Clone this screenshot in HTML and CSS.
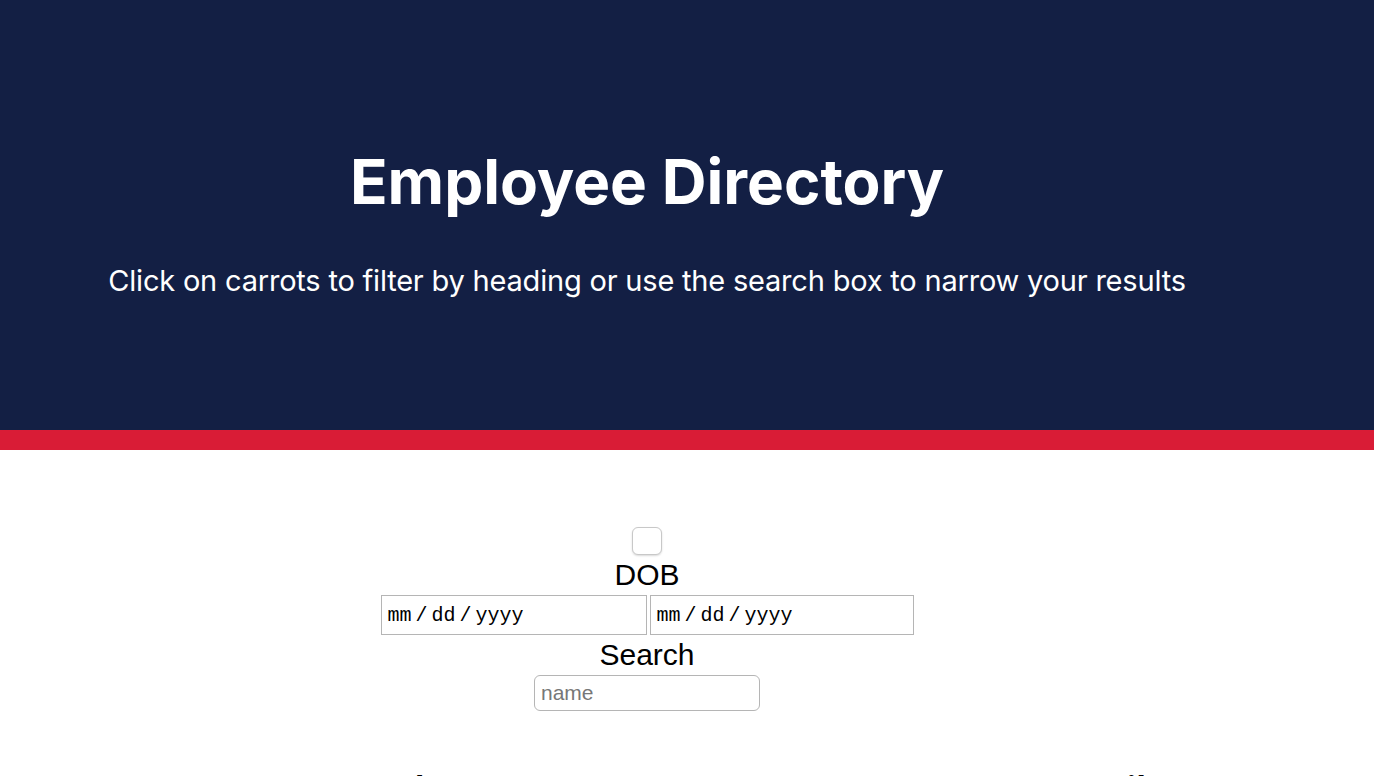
FILE: index.html
```html
<!DOCTYPE html>
<html>
<head>
<meta charset="utf-8">
<link rel="stylesheet" href="styles.css">
</head>
<body>
<header class="hero">
  <h1 class="hero-title">Employee Directory</h1>
  <p class="hero-sub">Click on carrots to filter by heading or use the search box to narrow your results</p>
</header>
<div class="stripe"></div>
<main class="content">
  <form class="filters">
    <input type="checkbox" class="check">
    <label class="label">DOB</label>
    <div class="dates">
      <div class="date"><span>mm</span><span>/</span><span>dd</span><span>/</span><span>yyyy</span></div>
      <div class="date date-2"><span>mm</span><span>/</span><span>dd</span><span>/</span><span>yyyy</span></div>
    </div>
    <label class="label">Search</label>
    <input type="text" class="search" placeholder="name">
  </form>
  <div class="table-head">
    <div class="th">Image</div>
    <div class="th">Phone</div>
    <div class="th">Name</div>
    <div class="th">DOB</div>
    <div class="th">Email</div>
  </div>
</main>
</body>
</html>
```
FILE: styles.css
```css
* { box-sizing: border-box; }
body {
  margin: 0;
  font-family: "Inter", "Liberation Sans", sans-serif;
  background: #fff;
  color: #000;
}
.hero {
  height: 430px;
  background: #131f44;
  color: #fff;
  padding: 144px 80px 0 0;
  text-align: center;
}
.hero-title {
  margin: 0;
  font-size: 62px;
  line-height: 76px;
  font-weight: 700;
}
.hero-sub {
  margin: 43px 0 0;
  font-size: 29px;
  line-height: 36px;
  font-weight: 400;
  letter-spacing: -0.2px;
}
.stripe {
  height: 20px;
  background: #d91c36;
}
.content {
  padding: 77px 80px 0 0;
  font-family: "Liberation Sans", "Helvetica", sans-serif;
}
.filters {
  display: flex;
  flex-direction: column;
  align-items: center;
}
.check {
  appearance: none;
  width: 30px;
  height: 28px;
  margin: 0;
  border: 1px solid #c8c8c8;
  border-radius: 6px;
  background: #fff;
  box-shadow: 0 1px 2px rgba(0,0,0,0.15);
}
.label {
  font-size: 30px;
  line-height: 40px;
}
.dates {
  display: flex;
  gap: 3px;
}
.date {
  display: flex;
  gap: 4px;
  width: 266px;
  height: 40px;
  border: 1px solid #b5b5b5;
  padding: 2px 6px 0;
  font-family: "Liberation Mono", "Courier New", monospace;
  font-size: 20px;
  line-height: 36px;
  color: #000;
}
.date-2 { width: 264px; }
.search {
  width: 226px;
  height: 36px;
  margin: 0;
  border: 1px solid #b5b5b5;
  border-radius: 6px;
  padding: 0 6px;
  font-family: "Liberation Sans", sans-serif;
  font-size: 21px;
}
.search::placeholder { color: #777; }
.table-head {
  display: grid;
  grid-template-columns: 320px 250px 160px 300px 144px;
  margin-top: 57px;
}
.th {
  font-family: "Open Sans", sans-serif;
  font-size: 32px;
  line-height: 40px;
  font-weight: 700;
  text-align: center;
}
```
